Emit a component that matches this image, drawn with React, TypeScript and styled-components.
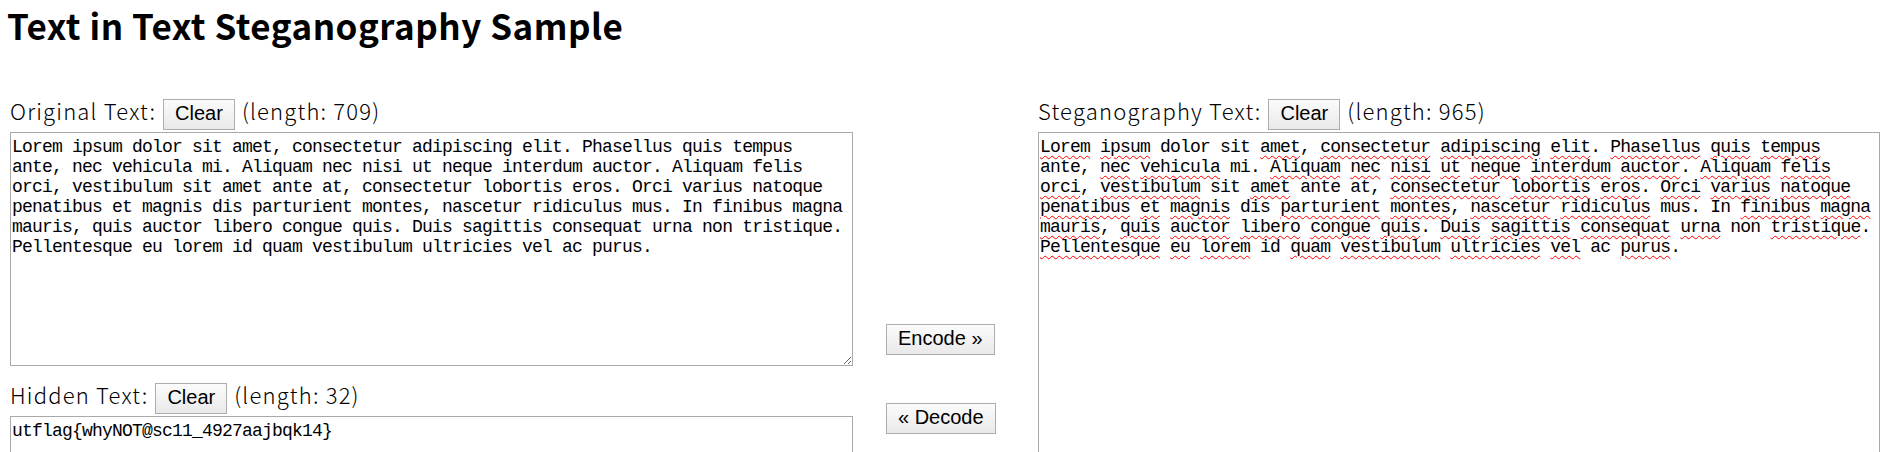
import React from "react";
import styled, { createGlobalStyle } from "styled-components";

const GlobalStyle = createGlobalStyle`
  html, body {
    margin: 0;
    padding: 0;
    overflow: hidden;
    background: #fff;
  }
  body {
    font-family: "Noto Sans CJK JP", "Noto Sans", sans-serif;
    color: #000;
  }
`;

const Page = styled.div`
  padding-left: 10px;
`;

const Title = styled.h1`
  margin: 0 0 50px -3px;
  padding-top: 1px;
  font-size: 35px;
  line-height: 48px;
  letter-spacing: 0.5px;
  font-weight: 700;
`;

const Columns = styled.div`
  display: flex;
  align-items: flex-start;
`;

const Side = styled.div<{ $width: number }>`
  width: ${(p) => p.$width}px;
  display: flex;
  flex-direction: column;
`;

const Middle = styled.div`
  width: 185px;
  box-sizing: border-box;
  padding: 225px 0 0 33px;
  display: flex;
  flex-direction: column;
  align-items: flex-start;
  gap: 48px;
`;

const LabelRow = styled.div<{ $top?: number }>`
  display: flex;
  align-items: baseline;
  gap: 7px;
  height: 31px;
  margin-top: ${(p) => p.$top ?? 0}px;
  margin-bottom: 2px;
  font-size: 22px;
  line-height: 22px;
  font-weight: 300;
  letter-spacing: 1.2px;
  white-space: nowrap;
`;

const Label = styled.span`
  color: #000;
`;

const Button = styled.button`
  box-sizing: border-box;
  height: 31px;
  margin: 0;
  padding: 2px 11px 4px;
  font-family: "Liberation Sans", Arial, sans-serif;
  font-size: 20px;
  font-weight: 400;
  line-height: 23px;
  letter-spacing: 0;
  color: #000;
  background: linear-gradient(#fbfbfb, #e9e9e9);
  border: 1px solid #adadad;
  border-radius: 0;
  cursor: pointer;
`;

const boxStyle = `
  box-sizing: border-box;
  display: block;
  width: 100%;
  margin: 0;
  padding: 4px 1px;
  border: 1px solid #a9a9a9;
  background: #fff;
  color: #000;
  font-family: "Liberation Mono", "DejaVu Sans Mono", monospace;
  font-size: 18px;
  letter-spacing: -0.8px;
  line-height: 20px;
  white-space: pre-wrap;
  overflow: hidden;
  outline: none;
`;

const TextBox = styled.textarea<{ $height: number }>`
  ${boxStyle}
  height: ${(p) => p.$height}px;
  resize: both;
`;

const StegoBox = styled.div<{ $height: number }>`
  ${boxStyle}
  height: ${(p) => p.$height}px;
`;

const Line = styled.div`
  height: 20px;
`;

const Flagged = styled.span`
  text-decoration-line: underline;
  text-decoration-style: wavy;
  text-decoration-color: #f00;
  text-decoration-thickness: 1px;
  text-underline-offset: 3px;
`;

const original = [
  "Lorem ipsum dolor sit amet, consectetur adipiscing elit. Phasellus quis tempus",
  "ante, nec vehicula mi. Aliquam nec nisi ut neque interdum auctor. Aliquam felis",
  "orci, vestibulum sit amet ante at, consectetur lobortis eros. Orci varius natoque",
  "penatibus et magnis dis parturient montes, nascetur ridiculus mus. In finibus magna",
  "mauris, quis auctor libero congue quis. Duis sagittis consequat urna non tristique.",
  "Pellentesque eu lorem id quam vestibulum ultricies vel ac purus.",
];

// "~" marks the words the spell checker flags in the stego text
const stego = [
  "~Lorem ~ipsum dolor sit ~amet, ~consectetur ~adipiscing ~elit. ~Phasellus ~quis ~tempus",
  "ante, ~nec ~vehicula mi. ~Aliquam ~nec ~nisi ~ut ~neque ~interdum ~auctor. ~Aliquam ~felis",
  "~orci, ~vestibulum sit ~amet ante at, ~consectetur ~lobortis ~eros. ~Orci ~varius ~natoque",
  "~penatibus ~et ~magnis dis ~parturient ~montes, ~nascetur ~ridiculus mus. In ~finibus ~magna",
  "~mauris, ~quis ~auctor ~libero ~congue ~quis. ~Duis ~sagittis ~consequat ~urna non ~tristique.",
  "~Pellentesque ~eu ~lorem id ~quam ~vestibulum ~ultricies ~vel ac ~purus.",
];

const renderLine = (line: string) =>
  line.split(" ").map((token, i) => {
    const sep = i > 0 ? " " : "";
    if (!token.startsWith("~")) return sep + token;
    const word = token.slice(1).replace(/[.,]$/, "");
    const punct = token.slice(1 + word.length);
    return (
      <React.Fragment key={i}>
        {sep}
        <Flagged>{word}</Flagged>
        {punct}
      </React.Fragment>
    );
  });

const App = () => {
  return (
    <Page>
      <GlobalStyle />
      <Title>Text in Text Steganography Sample</Title>
      <Columns>
        <Side $width={843}>
          <LabelRow>
            <Label>Original Text:</Label>
            <Button>Clear</Button>
            <Label>(length: 709)</Label>
          </LabelRow>
          <TextBox $height={234} defaultValue={original.join("\n")} spellCheck={false} />
          <LabelRow $top={17}>
            <Label>Hidden Text:</Label>
            <Button>Clear</Button>
            <Label>(length: 32)</Label>
          </LabelRow>
          <TextBox $height={120} defaultValue="utflag{whyNOT@sc11_4927aajbqk14}" spellCheck={false} />
        </Side>
        <Middle>
          <Button>Encode »</Button>
          <Button>« Decode</Button>
        </Middle>
        <Side $width={842}>
          <LabelRow>
            <Label>Steganography Text:</Label>
            <Button>Clear</Button>
            <Label>(length: 965)</Label>
          </LabelRow>
          <StegoBox $height={380}>
            {stego.map((l, i) => (
              <Line key={i}>{renderLine(l)}</Line>
            ))}
          </StegoBox>
        </Side>
      </Columns>
    </Page>
  );
};

export default App;
